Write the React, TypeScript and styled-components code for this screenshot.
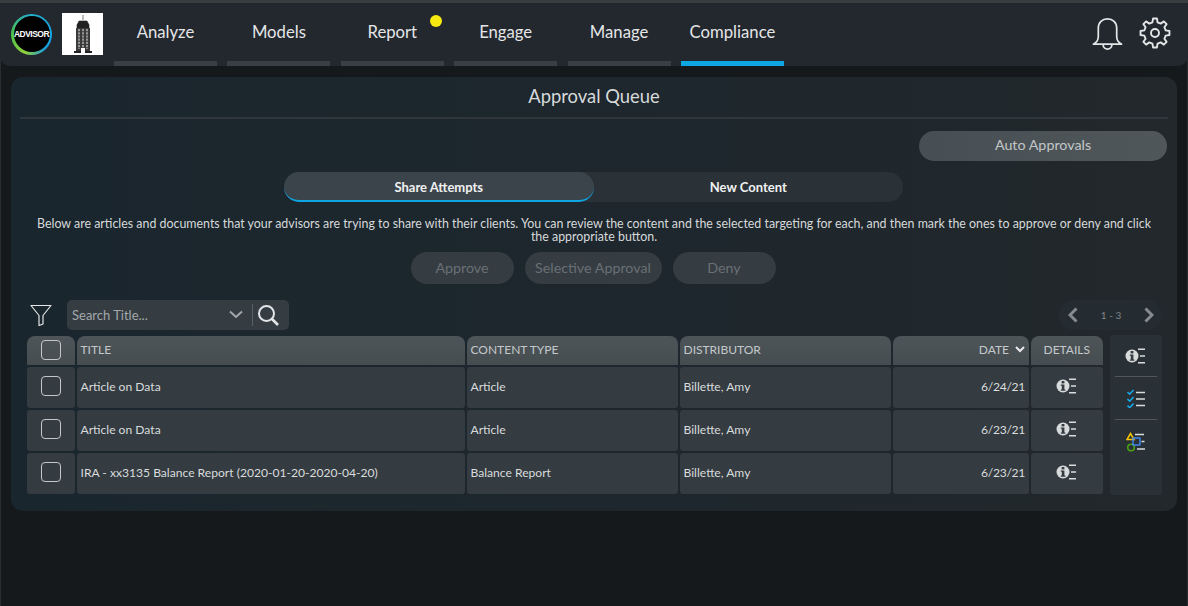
import React from "react";
import styled, { createGlobalStyle } from "styled-components";

const Global = createGlobalStyle`
  html, body { margin: 0; padding: 0; height: 100%; background: #15191c; }
  body { font-family: Lato, "Open Sans", "Liberation Sans", sans-serif; overflow: hidden; }
  * { box-sizing: border-box; }
`;

const Page = styled.div`
  width: 1188px; height: 606px; background: #15191c; padding-top: 3px;
  box-shadow: inset 0 3px 0 #3a3d40, inset 1px 0 0 #2a2d30, inset -1px 0 0 #2a2d30;
`;
const Nav = styled.header`
  height: 63px; background: #23272e; border-radius: 0 0 10px 10px;
  display: flex; align-items: stretch; padding: 0 17px 0 11px;
`;
const Brand = styled.div`
  display: flex; align-items: center; gap: 10px; width: 103px; flex: none; padding-bottom: 3px; margin-top: 2px;
`;
const Ring = styled.div`
  width: 41px; height: 41px; border-radius: 50%; flex: none;
  background: conic-gradient(from 200deg, #8fd03a 0deg, #4cc24a 70deg, #25b0c8 150deg, #12a5e8 250deg, #1c9fd8 300deg, #8fd03a 360deg);
  display: flex; align-items: center; justify-content: center;
`;
const RingInner = styled.div`
  width: 36px; height: 36px; border-radius: 50%; background: #000; color: #fff;
  font-size: 8.5px; font-weight: 700; letter-spacing: -0.5px;
  display: flex; align-items: center; justify-content: center;
  font-family: "Liberation Sans", sans-serif;
`;
const BuildingBox = styled.div`
  width: 41px; height: 42px; background: #fff; flex: none; display: flex; align-items: center; justify-content: center;
`;
const Tabs = styled.nav`
  display: flex; gap: 10.4px;
`;
const NavTab = styled.div<{ $active?: boolean }>`
  width: 103px; height: 63px; position: relative;
  display: flex; justify-content: center; padding-top: 19px;
  color: #e4e6e7; font-size: 16.7px; line-height: 20px;
  border-bottom: ${(p) => (p.$active ? "5px solid #0ea5e3" : "5px solid #3a3e45")};
`;
const Dot = styled.span`
  position: absolute; left: 89px; top: 12px; width: 12px; height: 12px; border-radius: 50%; background: #f6ea10;
`;
const NavIcons = styled.div`
  margin-left: auto; display: flex; align-items: flex-start; gap: 16px; padding-top: 14px;
`;
const Panel = styled.main`
  margin: 11px 11px 0; height: 434px; border-radius: 12px; padding: 0 9px;
  background: linear-gradient(90deg, #1a262e 0%, #1e272d 60%, #22282b 100%);
`;
const Title = styled.h1`
  margin: 0; height: 42px; border-bottom: 2px solid #2f373d; text-align: center;
  font-size: 18.4px; font-weight: 400; color: #d7dadb; line-height: 39px;
`;
const AutoRow = styled.div`
  display: flex; justify-content: flex-end; padding: 12px 1px 0 0;
`;
const AutoBtn = styled.div`
  width: 248px; height: 30px; border-radius: 15px; background: linear-gradient(90deg, #484f54, #50575a);
  color: #c2c6c8; font-size: 14.3px; text-align: center; line-height: 27px;
`;
const ToggleWrap = styled.div`
  width: 619px; height: 30px; margin: 11px 0 0 264px; display: flex; border-radius: 15px; background: #2a3137;
`;
const Toggle = styled.div<{ $active?: boolean }>`
  width: 50%; height: 100%; border-radius: 15px; text-align: center;
  font-size: 13px; font-weight: 700; color: #f0f1f1; line-height: 31px;
  background: ${(p) => (p.$active ? "#3c444b" : "transparent")};
  border-bottom: ${(p) => (p.$active ? "2px solid #0ea5e3" : "0")};
`;
const Intro = styled.p`
  margin: 15px auto 0; width: 1130px; text-align: center; color: #d6d9da;
  font-size: 12.4px; line-height: 13px;
`;
const Actions = styled.div`
  display: flex; justify-content: center; gap: 11px; margin: 9px 2px 0 0;
`;
const ActionBtn = styled.div<{ $w: number }>`
  width: ${(p) => p.$w}px; height: 32px; border-radius: 16px; background: #353c42;
  color: #697075; font-size: 14.3px; text-align: center; line-height: 31px;
`;
const Tools = styled.div`
  display: flex; align-items: center; height: 30px; margin-top: 16px; padding-left: 10px; padding-right: 6px;
`;
const Search = styled.div`
  width: 222px; height: 30px; margin-left: 15px; background: #353c42; border-radius: 5px;
  display: flex; align-items: center; padding: 0 0 1px 5px; color: #a3a8ab; font-size: 13px;
`;
const SearchText = styled.span` flex: 1; `;
const SearchDivider = styled.span`
  width: 1px; height: 22px; background: #59606a; margin: 0 4px 0 9px;
`;
const SearchIcon = styled.svg` margin-right: 10px; `;
const Pager = styled.div`
  margin-left: auto; width: 103px; height: 30px; border-radius: 15px; background: #252c31;
  display: flex; align-items: center; justify-content: space-between; padding: 0 8px 0 9px;
  color: #7f8589; font-size: 10px;
`;
const TableArea = styled.div`
  display: flex; gap: 7px; margin-top: 5px; padding-left: 7px;
`;
const Table = styled.div`
  display: grid; grid-template-columns: 48px 388px 211px 211px 136px 72px;
  grid-template-rows: 29px 41px 41px 41px; column-gap: 2px; row-gap: 2px; width: 1076px; margin-top: 1px;
`;
const Head = styled.div<{ $end?: boolean; $center?: boolean }>`
  background: linear-gradient(180deg, #4d5559, #454d51);
  border-radius: 8px 8px 0 0; color: #c4c8ca; font-size: 12px;
  display: flex; align-items: center; padding: 0 4px 2px 3.5px;
  justify-content: ${(p) => (p.$end ? "flex-end" : p.$center ? "center" : "flex-start")};
  gap: 6px;
`;
const Cell = styled.div<{ $end?: boolean; $center?: boolean; $lift?: number; $tight?: boolean }>`
  background: #343b41; border-radius: 3px; color: #d9dcdd; font-size: 12.1px;
  display: flex; align-items: center; padding: 0 4px 0 3.5px;
  padding-bottom: ${(p) => p.$lift ?? 2}px;
  letter-spacing: ${(p) => (p.$tight ? "-0.3px" : "0")};
  justify-content: ${(p) => (p.$end ? "flex-end" : p.$center ? "center" : "flex-start")};
`;
const Check = styled.div`
  width: 20px; height: 20px; border: 1.5px solid #c3c7c9; border-radius: 4px;
`;
const Side = styled.aside`
  width: 52px; height: 160px; background: #2a3136; border-radius: 3px;
  display: flex; flex-direction: column; align-items: center; padding: 13px 5px 0;
`;
const SideItem = styled.div<{ $line?: boolean; $h: number }>`
  width: 100%; height: ${(p) => p.$h}px; display: flex; justify-content: center;
  ${(p) => (p.$line ? "border-bottom: 1.5px solid #50565b; margin-bottom: 12px;" : "")}
`;

const gearPath = (() => {
  const pts: string[] = [];
  const teeth = 8;
  const step = (Math.PI * 2) / teeth;
  const p = (r: number, a: number) => `${(16 + r * Math.cos(a)).toFixed(2)} ${(16 + r * Math.sin(a)).toFixed(2)}`;
  for (let i = 0; i < teeth; i++) {
    const a = i * step - Math.PI / 2;
    pts.push(p(11, a - step * 0.3), p(14.6, a - step * 0.17), p(14.6, a + step * 0.17), p(11, a + step * 0.3));
  }
  return "M" + pts.join("L") + "Z";
})();

const InfoList = () => (
  <svg width="22" height="16" viewBox="0 0 22 16">
    <circle cx="7" cy="8" r="6.5" fill="#d8dbdc" />
    <rect x="5.6" y="3" width="2.8" height="2.4" fill="#343b41" />
    <path d="M4.8 6.6h3.6v5h1v1.200H4.800v-1.200h1v-3.800h-1z" fill="#343b41" />
    <path d="M13 1.200h7M15 8h5M13 14.800h7" stroke="#d8dbdc" strokeWidth="1.500" />
  </svg>
);
const CheckList = () => (
  <svg width="18" height="19" viewBox="0 0 18 19" fill="none">
    <path d="M0.500 3l2.200 2.200L6.500 1M0.500 10l2.200 2.200L6.500 8M0.500 16.500l2.200 2.200L6.500 14.500" stroke="#13a9ea" strokeWidth="1.600" />
    <path d="M9 3.500h9M9 10h9M9 16.500h9" stroke="#d8dbdc" strokeWidth="1.700" />
  </svg>
);
const Shapes = () => (
  <svg width="20" height="20" viewBox="0 0 20 20" fill="none">
    <path d="M4.500 1.500L1 7.500h7z" stroke="#f4c400" strokeWidth="1.500" />
    <circle cx="5" cy="15.500" r="3.300" stroke="#4aa312" strokeWidth="1.600" />
    <rect x="7" y="6" width="7" height="7" rx="0.500" stroke="#3f86ee" strokeWidth="1.500" />
    <path d="M9 2.500h9M15.500 9.500h3M11 17h8" stroke="#d8dbdc" strokeWidth="1.500" />
  </svg>
);

const rows = [
  ["Article on Data", "Article", "Billette, Amy", "6/24/21"],
  ["Article on Data", "Article", "Billette, Amy", "6/23/21"],
  ["IRA - xx3135 Balance Report (2020-01-20-2020-04-20)", "Balance Report", "Billette, Amy", "6/23/21"],
];
const tabs = ["Analyze", "Models", "Report", "Engage", "Manage", "Compliance"];

export default function App() {
  return (
    <Page>
      <Global />
      <Nav>
        <Brand>
          <Ring><RingInner>ADVISOR</RingInner></Ring>
          <BuildingBox>
            <svg width="20" height="38" viewBox="0 0 20 38">
              <path d="M10 0v5M6 6h8l2 4H4zM4 10h12v3H4z" stroke="#222" strokeWidth="0.600" fill="#222" />
              <rect x="3" y="13" width="14" height="23" fill="#3a3a3a" />
              <path d="M6 14v20M10 14v20M14 14v20" stroke="#bdbdbd" strokeWidth="1.400" strokeDasharray="2.200 1" />
              <rect x="1" y="36" width="18" height="2" fill="#222" />
              <rect x="8" y="33" width="4" height="5" fill="#fff" />
            </svg>
          </BuildingBox>
        </Brand>
        <Tabs>
          {tabs.map((t) => (
            <NavTab key={t} $active={t === "Compliance"}>
              {t}
              {t === "Report" && <Dot />}
            </NavTab>
          ))}
        </Tabs>
        <NavIcons>
          <svg width="31" height="34" viewBox="0 0 32 34" fill="none" stroke="#e3e5e6" strokeWidth="1.800">
            <path d="M1.500 27.500c3-2 5-3.500 5-8V11c0-6 4-9.500 9.500-9.500S25.500 5 25.500 11v8.500c0 4.500 2 6 5 8z" strokeLinejoin="round" />
            <path d="M11.500 28c0 6 9 6 9 0" />
          </svg>
          <svg width="32" height="32" viewBox="0 0 32 32" fill="none" stroke="#e3e5e6" strokeWidth="1.900" strokeLinejoin="round">
            <path d={gearPath} />
            <circle cx="16" cy="16" r="4" />
          </svg>
        </NavIcons>
      </Nav>
      <Panel>
        <Title>Approval Queue</Title>
        <AutoRow><AutoBtn>Auto Approvals</AutoBtn></AutoRow>
        <ToggleWrap>
          <Toggle $active>Share Attempts</Toggle>
          <Toggle>New Content</Toggle>
        </ToggleWrap>
        <Intro>
          Below are articles and documents that your advisors are trying to share with their clients. You can review the content and the selected targeting for each, and then mark the ones to approve or deny and click the appropriate button.
        </Intro>
        <Actions>
          <ActionBtn $w={103}>Approve</ActionBtn>
          <ActionBtn $w={137}>Selective Approval</ActionBtn>
          <ActionBtn $w={103}>Deny</ActionBtn>
        </Actions>
        <Tools>
          <svg width="22" height="22" viewBox="0 0 22 22" fill="none" stroke="#e3e5e6" strokeWidth="1.200" strokeLinejoin="round">
            <path d="M1 1.500h20l-8 10v8.500l-4 1.500V11.500z" />
          </svg>
          <Search>
            <SearchText>Search Title...</SearchText>
            <svg width="14" height="9" viewBox="0 0 14 9" fill="none" stroke="#a3a8ab" strokeWidth="2"><path d="M1 1.500l6 5.500 6-5.500" /></svg>
            <SearchDivider />
            <SearchIcon width="22" height="22" viewBox="0 0 22 22" fill="none" stroke="#e3e5e6" strokeWidth="2">
              <circle cx="9.500" cy="9.500" r="7.500" /><path d="M15 15l6 6" strokeWidth="2.600" />
            </SearchIcon>
          </Search>
          <Pager>
            <svg width="10" height="16" viewBox="0 0 10 16" fill="none" stroke="#858b8f" strokeWidth="3"><path d="M8.500 1.500L2 8l6.500 6.500" /></svg>
            <span>1 - 3</span>
            <svg width="10" height="16" viewBox="0 0 10 16" fill="none" stroke="#858b8f" strokeWidth="3"><path d="M1.500 1.500L8 8l-6.500 6.500" /></svg>
          </Pager>
        </Tools>
        <TableArea>
          <Table>
            <Head $center><Check /></Head>
            <Head>TITLE</Head>
            <Head>CONTENT TYPE</Head>
            <Head>DISTRIBUTOR</Head>
            <Head $end>
              DATE
              <svg width="10" height="7" viewBox="0 0 10 7" fill="none" stroke="#e8e9ea" strokeWidth="2"><path d="M1 1l4 4 4-4" /></svg>
            </Head>
            <Head $center>DETAILS</Head>
            {rows.map((r, i) => (
              <React.Fragment key={i}>
                <Cell $center $lift={4}><Check /></Cell>
                <Cell>{r[0]}</Cell>
                <Cell>{r[1]}</Cell>
                <Cell>{r[2]}</Cell>
                <Cell $end $tight>{r[3]}</Cell>
                <Cell $center $lift={4}><InfoList /></Cell>
              </React.Fragment>
            ))}
          </Table>
          <Side>
            <SideItem $line $h={29}><InfoList /></SideItem>
            <SideItem $line $h={31}><CheckList /></SideItem>
            <SideItem $h={22}><Shapes /></SideItem>
          </Side>
        </TableArea>
      </Panel>
    </Page>
  );
}
